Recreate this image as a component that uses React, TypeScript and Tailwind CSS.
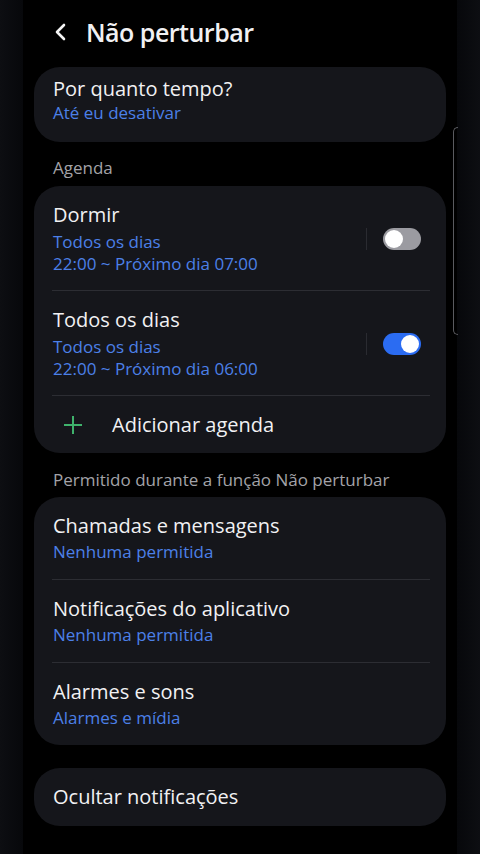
import React from 'react';

const font = { fontFamily: '"Open Sans", Roboto, sans-serif' };

function Toggle({ on }: { on: boolean }) {
  return (
    <div className="flex items-center">
      <div className="w-px h-[22px] bg-[#2a2b31] mr-4" />
      <div
        className={`w-[38px] h-[22px] rounded-full flex items-center px-[2px] ${
          on ? 'bg-[#2b6cf2] justify-end' : 'bg-[#9b9ba1] justify-start'
        }`}
      >
        <div className="w-[18px] h-[18px] rounded-full bg-white" />
      </div>
    </div>
  );
}

function Divider() {
  return <div className="h-px bg-[#2c2d33] ml-[18px] mr-[16px]" />;
}

function Sub({ children }: { children: React.ReactNode }) {
  return <div className="text-[17px] leading-[22px] text-[#4c80e8]">{children}</div>;
}

export default function App() {
  return (
    <div className="w-[480px] h-[854px] flex bg-black overflow-hidden text-[#f1f1f3]" style={font}>
      <div className="w-[23px] bg-gradient-to-r from-[#0d0e12] to-[#07080b]" />
      <div className="flex-1 relative bg-black px-[11px]">
        {/* header */}
        <div className="h-[67px] flex items-center pl-[20px] pb-[3px]">
          <svg width="14" height="20" viewBox="0 0 14 20" fill="none">
            <path d="M10 3 L3 10 L10 17" stroke="#f4f4f4" strokeWidth="2.6" strokeLinecap="round" strokeLinejoin="round" />
          </svg>
          <h1 className="ml-[18px] text-[25px] font-semibold leading-[32px] tracking-[-0.5px]">Não perturbar</h1>
        </div>

        {/* duration */}
        <div className="rounded-[26px] bg-[#15161b] pl-[19px] pt-[9px] pb-[18px]">
          <div className="text-[20px] leading-[26px]">Por quanto tempo?</div>
          <Sub>Até eu desativar</Sub>
        </div>

        <div className="mt-[15px] mb-[7px] pl-[19px] text-[17px] leading-[22px] text-[#a3a3a8]">Agenda</div>

        {/* schedules */}
        <div className="rounded-[26px] bg-[#15161b]">
          <div className="flex items-center justify-between pl-[19px] pr-[25px] pt-[16px] pb-[15px]">
            <div>
              <div className="text-[20px] leading-[26px] mb-[3px]">Dormir</div>
              <Sub>Todos os dias</Sub>
              <Sub>22:00 ~ Próximo dia 07:00</Sub>
            </div>
            <Toggle on={false} />
          </div>
          <Divider />
          <div className="flex items-center justify-between pl-[19px] pr-[25px] pt-[16px] pb-[15px]">
            <div>
              <div className="text-[20px] leading-[26px] mb-[3px]">Todos os dias</div>
              <Sub>Todos os dias</Sub>
              <Sub>22:00 ~ Próximo dia 06:00</Sub>
            </div>
            <Toggle on={true} />
          </div>
          <Divider />
          <div className="h-[57px] flex items-center pl-[29px]">
            <svg width="20" height="20" viewBox="0 0 20 20">
              <path d="M10 1 V19 M1 10 H19" stroke="#3fb26c" strokeWidth="2" />
            </svg>
            <span className="ml-[29px] text-[20px] leading-[26px]">Adicionar agenda</span>
          </div>
        </div>

        <div className="mt-[16px] mb-[6px] pl-[19px] text-[17px] leading-[22px] text-[#a3a3a8]">
          Permitido durante a função Não perturbar
        </div>

        {/* allowed */}
        <div className="rounded-[26px] bg-[#15161b]">
          {[
            ['Chamadas e mensagens', 'Nenhuma permitida'],
            ['Notificações do aplicativo', 'Nenhuma permitida'],
            ['Alarmes e sons', 'Alarmes e mídia'],
          ].map(([t, s], i) => (
            <div key={t}>
              {i > 0 && <Divider />}
              <div className="pl-[19px] pt-[16px] pb-[16px]">
                <div className="text-[20px] leading-[26px] mb-[2px]">{t}</div>
                <Sub>{s}</Sub>
              </div>
            </div>
          ))}
        </div>

        <div className="mt-[23px] h-[58px] rounded-[26px] bg-[#15161b] flex items-center pl-[19px]">
          <span className="text-[20px] leading-[26px]">Ocultar notificações</span>
        </div>

        {/* scroll indicator */}
        <div className="absolute left-[430px] top-[127px] w-[5px] h-[208px] border-l border-t border-b border-[#5a5b60] rounded-l-[5px]" />
      </div>
      <div className="w-[23px] bg-gradient-to-l from-[#0d0e12] to-[#07080b]" />
    </div>
  );
}
